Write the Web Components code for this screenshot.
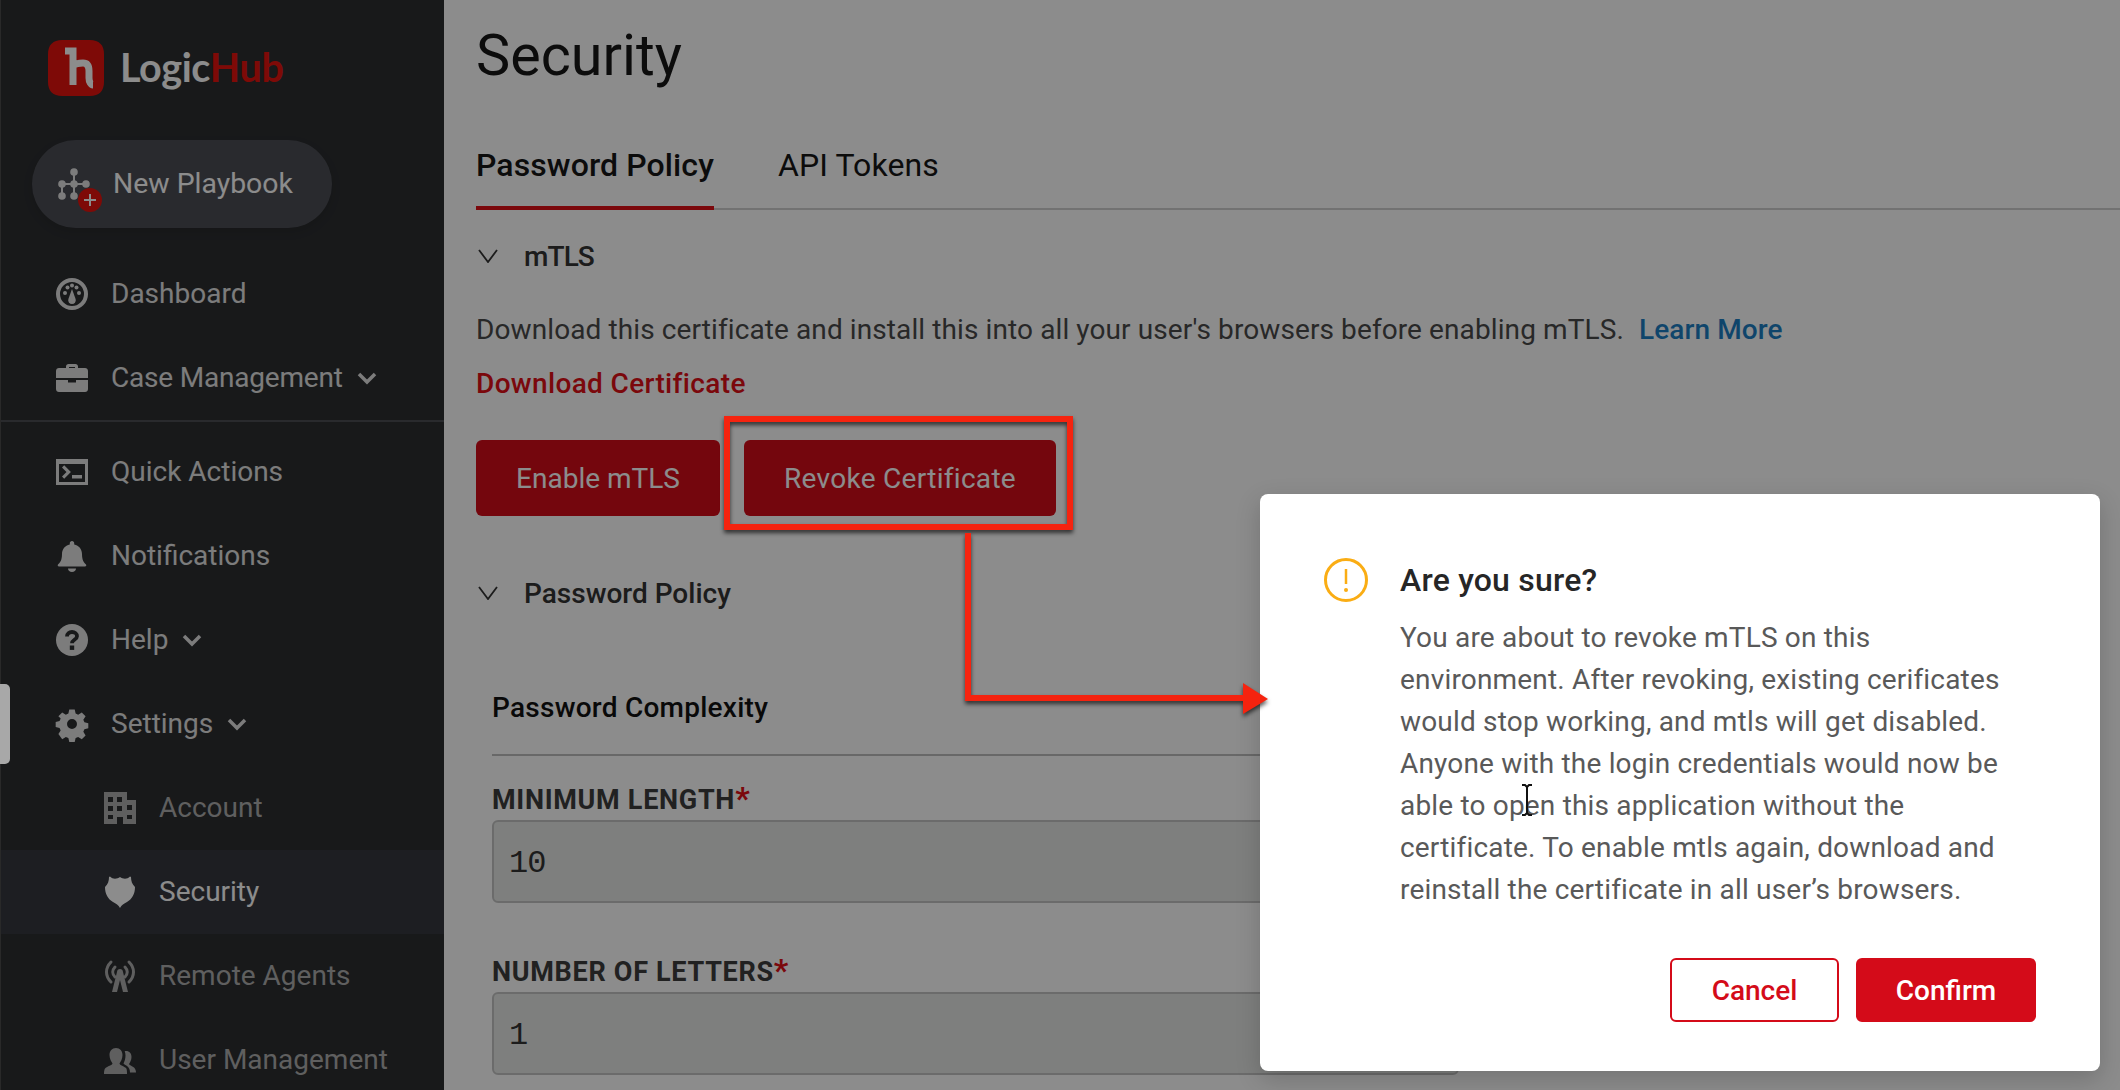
<!DOCTYPE html>
<html>
<head>
<meta charset="utf-8">
<title>Security</title>
<style>
  html, body { margin: 0; height: 1090px; overflow: hidden; }
  body { font-family: Roboto, "Liberation Sans", sans-serif; position: relative; }
</style>
</head>
<body>
<lh-app>
  <lh-sidebar slot="sidebar">
    <lh-nav-item icon="dashboard">Dashboard</lh-nav-item>
    <lh-nav-item icon="briefcase" chevron style="letter-spacing:-.2px">Case Management</lh-nav-item>
    <lh-nav-item icon="terminal" divided>Quick Actions</lh-nav-item>
    <lh-nav-item icon="bell">Notifications</lh-nav-item>
    <lh-nav-item icon="help" chevron>Help</lh-nav-item>
    <lh-nav-item icon="gear" chevron>Settings</lh-nav-item>
    <lh-nav-item icon="building" sub>Account</lh-nav-item>
    <lh-nav-item icon="shield" sub active>Security</lh-nav-item>
    <lh-nav-item icon="antenna" sub>Remote Agents</lh-nav-item>
    <lh-nav-item icon="users" sub>User Management</lh-nav-item>
  </lh-sidebar>
  <lh-security-page slot="main"></lh-security-page>
</lh-app>
<lh-confirm-dialog heading="Are you sure?">
  You are about to revoke mTLS on this environment. After revoking, existing cerificates would stop working, and mtls will get disabled. Anyone with the login credentials would now be able to open this application without the certificate. To enable mtls again, download and reinstall the certificate in all user’s browsers.
</lh-confirm-dialog>
<lh-callout></lh-callout>

<script>
const ICONS = {
  dashboard: `<circle cx="16" cy="16" r="14" fill="none" stroke="currentColor" stroke-width="4"/><circle cx="9" cy="15" r="2"/><circle cx="11.500" cy="9.500" r="2"/><circle cx="16" cy="7.500" r="2"/><circle cx="20.500" cy="9.500" r="2"/><circle cx="23" cy="15" r="2"/><path d="M16 11l3.600 10a3.800 3.800 0 1 1-7.200 0z"/>`,
  briefcase: `<path fill-rule="evenodd" d="M10 6V4.500C10 3.100 11.100 2 12.500 2h7C20.900 2 22 3.100 22 4.500V6h7c1.700 0 3 1.300 3 3v7H0V9c0-1.700 1.300-3 3-3zm3 0h6V5h-6zM0 18h12v2.500h8V18h12v9c0 1.700-1.300 3-3 3H3c-1.700 0-3-1.300-3-3z"/>`,
  terminal: `<path fill-rule="evenodd" d="M0 3h32v26H0zM3 8v18h26V8zm3 3.500 2.200-2.200 6.700 6.700-6.700 6.700L6 20.500l4.500-4.500zM16 19h10v3.500H16z"/>`,
  bell: `<path d="M16 1c1.300 0 2.200 1 2.200 2.200v1.300C23 5.500 26 9.300 26 14c0 6.500 2 8.500 4 10.500.7.800.2 2-1 2H3c-1.200 0-1.700-1.200-1-2C4 22.500 6 20.500 6 14c0-4.700 3-8.500 7.800-9.500V3.200C13.800 2 14.700 1 16 1zM12 28.500h8c0 2-1.800 3.500-4 3.500s-4-1.500-4-3.500z"/>`,
  help: `<circle cx="16" cy="16" r="16"/><path d="M11 12.500c0-2.800 2.200-4.500 5-4.500s5 1.700 5 4.200c0 3.600-5 3.600-5 7" fill="none" stroke="var(--hole)" stroke-width="3.800"/><rect x="13.800" y="21.500" width="4.400" height="4.400" fill="var(--hole)"/>`,
  gear: `<path fill-rule="evenodd" d="M13 0h6l1 4.500 2.800 1.200 4-2.500 4.200 4.200-2.500 4 1.200 2.800 4.300 1v5.600l-4.300 1-1.200 2.800 2.500 4-4.200 4.200-4-2.500-2.800 1.200-1 4.300h-6l-1-4.300-2.800-1.200-4 2.500L1 27.100l2.500-4-1.200-2.800L-2 19.300v-5.600l4.300-1 1.200-2.800L1 7.400l4.200-4.200 4 2.500L12 4.500zM16 10.500a5.500 5.500 0 1 0 0 11 5.500 5.500 0 0 0 0-11z" transform="translate(1.500 1.500) scale(.906)"/>`,
  building: `<path fill-rule="evenodd" d="M0 0h23v8h9v24H19v-7h-6v7H0zM4 5v5h5V5zm9 0v5h5V5zM4 14v5h5v-5zm9 0v5h5v-5zm10-1v5h5v-5zM4 23v4h5v-4zm19 0v4h5v-4z"/>`,
  shield: `<path d="M16 1c3 2 7 2.500 10-.5l1 .5c0 4 1 7 4 10 0 7-3 12-8 15-3 1.500-5.500 3-7 6-1.500-3-4-4.500-7-6C4 23 1 18 1 11c3-3 4-6 4-10l1-.5c3 3 7 2.500 10 .5z"/>`,
  antenna: `<g fill="none" stroke="currentColor" stroke-width="3" stroke-linecap="round"><path d="M7 2C1 8 1 16 7 22"/><path d="M25 2c6 6 6 14 0 20"/><path d="M11 7c-3 3-3 7 0 10"/><path d="M21 7c3 3 3 7 0 10"/></g><path d="M16 9c1.700 0 3 1.300 3 3l5 20h-5l-3-12-3 12H8l5-20c0-1.700 1.300-3 3-3z"/>`,
  users: `<path d="M12 4c4 0 6.500 3 6.500 7s-2 7-3 8.500c0 1.500 5 3 6.500 4.500 1 1 1 4 1 6H0c0-2 .2-5 1.500-6 1.500-1.500 7-3 7-4.500C7.500 18 5.500 15 5.500 11S8 4 12 4zM22 7c3.500 0 5.500 2.500 5.500 6 0 3-1.500 5.500-2.500 7 0 1 3 2 5 3.500 1.200 1 2 3 2 5H26c0-3-1-5-3-6.500-1.500-1-3-1.700-3.500-2.500 1-2 2-5 2-8 0-1.500-.3-3-.8-4.300.4-.2.800-.2 1.300-.2z"/>`
};

class LhApp extends HTMLElement {
  constructor() {
    super();
    this.attachShadow({mode: 'open'});
    this.shadowRoot.innerHTML = this.template;
  }
  get template() {
    return `<style>
      :host { display: flex; width: 2120px; height: 1090px; overflow: hidden; position: relative; background: #fff; }
      .scrim { position: absolute; inset: 0; background: rgba(0, 0, 0, .45); }
    </style>
    <slot name="sidebar"></slot>
    <slot name="main"></slot>
    <div class="scrim"></div>`;
  }
}

class LhSidebar extends HTMLElement {
  constructor() {
    super();
    this.attachShadow({mode: 'open'});
    this.shadowRoot.innerHTML = this.template;
  }
  get template() {
    return `<style>
      :host {
        display: flex; flex-direction: column; flex: none; box-sizing: border-box;
        width: 444px; height: 1090px; overflow: hidden;
        background: #2c2e31; color: #e2e2e2;
        border-left: 1px solid #4c4c4c;
      }
      .brand { display: flex; flex: none; align-items: center; height: 140px; padding-left: 47px; box-sizing: border-box; gap: 16px; }
      .mark { width: 56px; height: 56px; flex: none; margin-top: -4px; }
      .word { font: 700 39.500px/56px Lato, sans-serif; letter-spacing: -.4px; margin-top: -6px; color: #fff; }
      .word b { font-weight: 700; color: #e5130d; }
      .pill {
        display: flex; flex: none; align-items: center; box-sizing: border-box; width: 300px; height: 88px; margin: 0 0 24px 31px;
        padding-left: 26px; gap: 11px; border-radius: 44px; background: #4c4e55;
        font-size: 28.400px; color: #fff; box-shadow: 0 4px 10px rgba(0, 0, 0, .12);
      }
      .pill svg { flex: none; width: 44px; height: 46px; overflow: visible; }
      .pill span { margin-top: -1px; }
    </style>
    <div class="brand">
      <svg class="mark" viewBox="0 0 56 56">
        <path d="M14 0h28c9 0 14 5 14 14v28c0 9-5 14-14 14H14C5 56 0 51 0 42V14C0 5 5 0 14 0z" fill="#e5130d"/>
        <path d="M17 11h8v34M25 26c3-3 7-3 10-3 5 0 6 4 6 8v7c0 4 2 7 4 7" fill="none" stroke="#fff" stroke-width="7"/>
      </svg>
      <span class="word">Logic<b>Hub</b></span>
    </div>
    <div class="pill">
      <svg viewBox="0 0 44 46">
        <g fill="#e2e2e2">
          <circle cx="16" cy="11" r="3.800"/><circle cx="4" cy="23" r="3.800"/><circle cx="16" cy="23" r="3.800"/><circle cx="28" cy="23" r="3.800"/><circle cx="4" cy="35" r="3.800"/><circle cx="16" cy="35" r="3.800"/>
        </g>
        <path d="M16 11v24M4 23h24M4 23v12" stroke="#e2e2e2" stroke-width="2" fill="none"/>
        <circle cx="32" cy="39" r="12" fill="#e5130d"/>
        <path d="M32 33v12M26 39h12" stroke="#fff" stroke-width="2"/>
      </svg>
      <span>New Playbook</span>
    </div>
    <slot></slot>`;
  }
}

class LhNavItem extends HTMLElement {
  constructor() {
    super();
    this.attachShadow({mode: 'open'});
  }
  connectedCallback() {
    const name = this.getAttribute('icon');
    const chevron = this.hasAttribute('chevron')
      ? `<svg class="chev" viewBox="0 0 20 14"><path d="M2 3l8 8 8-8" fill="none" stroke="currentColor" stroke-width="3.500"/></svg>` : '';
    this.shadowRoot.innerHTML = `<style>
      :host {
        display: flex; align-items: center; flex: none; box-sizing: border-box; height: 84px;
        padding-left: 55px; gap: 23px; font-size: 28px; color: #e2e2e2; --hole: #2c2e31;
      }
      :host([sub]) { padding-left: 103px; color: #adadad; }
      :host([active]) { background: #35373e; color: #fff; --hole: #35373e; }
      :host([divided]) { height: 94px; padding-top: 8px; border-top: 2px solid #4c4e52; }
      slot { display: block; margin-top: -1px; }
      .ico { width: 32px; height: 32px; flex: none; fill: currentColor; overflow: visible; }
      .chev { width: 20px; height: 14px; flex: none; margin-left: -9px; }
    </style>
    <svg class="ico" viewBox="0 0 32 32">${ICONS[name]}</svg><slot></slot>${chevron}`;
  }
}

class LhSecurityPage extends HTMLElement {
  constructor() {
    super();
    this.attachShadow({mode: 'open'});
    this.shadowRoot.innerHTML = this.template;
  }
  get template() {
    return `<style>
      :host { display: block; flex: 1; min-width: 0; box-sizing: border-box; padding-left: 32px; height: 1090px; overflow: hidden; color: #161616; }
      h1 { margin: 0; font: 400 57.500px/112px Roboto, sans-serif; }
      .tabs { display: flex; gap: 64px; box-shadow: inset 0 -2px 0 #d0d0d0; height: 98px; box-sizing: border-box; padding-top: 33px; font-size: 32px; line-height: 40px; letter-spacing: .1px; }
      .tab { height: 65px; box-sizing: border-box; }
      .tab.on { font-weight: 500; border-bottom: 4px solid #e00f17; }
      p { margin: 34px 0 0; font-size: 28px; line-height: 40px; color: #4a4a4a; letter-spacing: .1px; }
      p a { margin-left: 8px; font-weight: 500; color: #1d7fc4; }
      .download { display: block; margin-top: 14px; font-size: 28px; line-height: 40px; font-weight: 500; color: #e00f17; letter-spacing: .35px; }
      .actions { display: flex; gap: 24px; margin-top: 36px; }
      .complexity { margin: 75px 0 0 16px; width: 967px; box-sizing: border-box; height: 68px; border-bottom: 2px solid #bdbdbd; font-size: 28px; line-height: 40px; font-weight: 500; color: #111; letter-spacing: .25px; }
      .fields { margin-left: 16px; width: 967px; padding-top: 24px; display: flex; flex-direction: column; gap: 49px; }
    </style>
    <h1>Security</h1>
    <div class="tabs"><div class="tab on">Password Policy</div><div class="tab">API Tokens</div></div>
    <lh-section-title style="margin-top:26px;letter-spacing:-.9px">mTLS</lh-section-title>
    <p>Download this certificate and install this into all your user's browsers before enabling mTLS. <a>Learn More</a></p>
    <a class="download">Download Certificate</a>
    <div class="actions"><lh-button width="244">Enable mTLS</lh-button><lh-button width="312" style="letter-spacing:.3px">Revoke Certificate</lh-button></div>
    <lh-section-title style="margin-top:57px">Password Policy</lh-section-title>
    <div class="complexity">Password Complexity</div>
    <div class="fields">
      <lh-field label="MINIMUM LENGTH" value="10"></lh-field>
      <lh-field label="NUMBER OF LETTERS" value="1"></lh-field>
    </div>`;
  }
}

class LhSectionTitle extends HTMLElement {
  constructor() {
    super();
    this.attachShadow({mode: 'open'});
    this.shadowRoot.innerHTML = `<style>
      :host { display: flex; align-items: center; height: 40px; gap: 26px; padding-left: 2px; font-size: 28px; font-weight: 500; color: #333; }
      svg { width: 20px; height: 14px; flex: none; }
    </style>
    <svg viewBox="0 0 20 14"><path d="M1 1l9 12 9-12" fill="none" stroke="currentColor" stroke-width="1.800"/></svg><slot></slot>`;
  }
}

class LhButton extends HTMLElement {
  constructor() {
    super();
    this.attachShadow({mode: 'open'});
    this.shadowRoot.innerHTML = `<style>
      :host { display: inline-flex; align-items: center; justify-content: center; box-sizing: border-box; height: 76px; border-radius: 6px; background: #d40b19; color: #fff; font-size: 28px; }
      :host([ghost]) { background: #fff; color: #d40b19; border: 2px solid #d40b19; }
    </style><slot></slot>`;
  }
  connectedCallback() {
    if (this.hasAttribute('width')) this.style.width = this.getAttribute('width') + 'px';
  }
}

class LhField extends HTMLElement {
  constructor() {
    super();
    this.attachShadow({mode: 'open'});
  }
  connectedCallback() {
    this.shadowRoot.innerHTML = `<style>
      :host { display: block; }
      label { display: block; height: 40px; line-height: 40px; font-size: 27px; font-weight: 700; color: #3c3c3c; letter-spacing: .7px; }
      label b { font-size: 32px; line-height: 30px; font-weight: 700; color: #e00f17; }
      .input { box-sizing: border-box; height: 83px; padding-left: 15px; border: 2px solid #c4c4c4; border-radius: 6px; background: #e5e8e5; font: 32px/83px "Liberation Mono", monospace; letter-spacing: -1px; color: #333; }
    </style>
    <label>${this.getAttribute('label')}<b>*</b></label>
    <div class="input">${this.getAttribute('value')}</div>`;
  }
}

class LhConfirmDialog extends HTMLElement {
  constructor() {
    super();
    this.attachShadow({mode: 'open'});
  }
  connectedCallback() {
    this.shadowRoot.innerHTML = `<style>
      :host {
        position: absolute; left: 1260px; top: 494px; width: 840px; height: 577px; box-sizing: border-box;
        padding: 64px 64px 0 64px; background: #fff; border-radius: 8px; box-shadow: 0 8px 24px rgba(0, 0, 0, .18);
        display: grid; grid-template-columns: 44px 1fr; column-gap: 32px; grid-template-rows: auto; align-content: start;
      }
      svg { width: 44px; height: 44px; }
      h2 { margin: 0; font-size: 32px; line-height: 45px; font-weight: 500; color: #262626; letter-spacing: .2px; }
      .body { grid-column: 2; margin-top: 14px; font-size: 28px; line-height: 42px; color: #595959; width: 610px; letter-spacing: .18px; }
      .foot { grid-column: 1 / 3; display: flex; justify-content: flex-end; gap: 17px; margin-top: 47px; }
      lh-button { height: 64px; font-weight: 500; }
    </style>
    <svg viewBox="0 0 44 44"><circle cx="22" cy="22" r="20.500" fill="none" stroke="#faad14" stroke-width="3"/><path d="M22 11v15" stroke="#faad14" stroke-width="2.500"/><circle cx="22" cy="32" r="2" fill="#faad14"/></svg>
    <h2>${this.getAttribute('heading')}</h2>
    <div class="body"><slot></slot></div>
    <div class="foot"><lh-button ghost width="169">Cancel</lh-button><lh-button width="180">Confirm</lh-button></div>`;
  }
}

class LhCallout extends HTMLElement {
  constructor() {
    super();
    this.attachShadow({mode: 'open'});
    this.shadowRoot.innerHTML = `<style>
      :host { position: absolute; inset: 0; display: block; pointer-events: none; }
      svg { position: absolute; inset: 0; }
      .mark { filter: drop-shadow(0 3px 2px rgba(0, 0, 0, .65)); }
    </style>
    <svg width="2120" height="1090" viewBox="0 0 2120 1090">
      <path d="M0 684h5a5 5 0 0 1 5 5v70a5 5 0 0 1-5 5H0z" fill="#a8a8a8"/>
      <g class="mark" fill="none" stroke="#f5230f" stroke-width="6">
        <rect x="727" y="419" width="343" height="108"/>
        <path d="M968 533v165h276"/>
        <path d="M1243 683l25 16-25 15z" fill="#f5230f" stroke="none"/>
      </g>
      <path d="M1522 785h3l2 2 2-2h3M1527 787v26M1522 815h3l2-2 2 2h3" fill="none" stroke="#111" stroke-width="2"/>
    </svg>`;
  }
}

customElements.define('lh-app', LhApp);
customElements.define('lh-sidebar', LhSidebar);
customElements.define('lh-nav-item', LhNavItem);
customElements.define('lh-security-page', LhSecurityPage);
customElements.define('lh-section-title', LhSectionTitle);
customElements.define('lh-button', LhButton);
customElements.define('lh-field', LhField);
customElements.define('lh-confirm-dialog', LhConfirmDialog);
customElements.define('lh-callout', LhCallout);
</script>
</body>
</html>
